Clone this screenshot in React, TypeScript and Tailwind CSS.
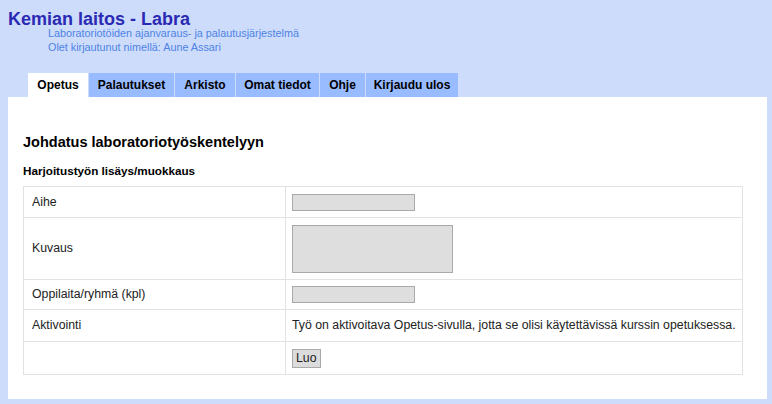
import React from 'react';

const tabs = [
  { label: 'Opetus', w: 'w-[60px]', active: true },
  { label: 'Palautukset', w: 'w-[85px]' },
  { label: 'Arkisto', w: 'w-[60px]' },
  { label: 'Omat tiedot', w: 'w-[83px]' },
  { label: 'Ohje', w: 'w-[45px]' },
  { label: 'Kirjaudu ulos', w: 'w-[92px]' },
];

const App = () => {
  return (
    <div className="w-[772px] h-[404px] overflow-hidden bg-[#cddcfb] font-['Liberation_Sans',Arial,sans-serif] text-[#222]">
      {/* header */}
      <div className="pl-[8px] pt-[8px]">
        <h1 className="text-[18px] leading-[22px] font-bold text-[#2a2ab4]">Kemian laitos - Labra</h1>
        <div className="-mt-[4px] pl-[40px] text-[10.8px] leading-[14px] text-[#4d83e4]">
          <div>Laboratoriotöiden ajanvaraus- ja palautusjärjestelmä</div>
          <div>Olet kirjautunut nimellä: Aune Assari</div>
        </div>
      </div>

      {/* tabs */}
      <div className="flex mt-[19px] ml-[28px] h-[24px]">
        {tabs.map((t) => (
          <div
            key={t.label}
            className={`${t.w} mr-[1px] flex items-center justify-center text-[12px] font-bold text-black ${
              t.active ? 'bg-white' : 'bg-[#99bbff]'
            }`}
          >
            {t.label}
          </div>
        ))}
      </div>

      {/* content panel */}
      <div className="ml-[8px] w-[759px] h-[302px] bg-white px-[15px] pt-[37px]">
        <h2 className="text-[14.5px] leading-[17px] font-bold text-black">Johdatus laboratoriotyöskentelyyn</h2>
        <h3 className="mt-[13px] text-[11.7px] leading-[14px] font-bold text-black">Harjoitustyön lisäys/muokkaus</h3>

        <table className="mt-[8px] w-[720px] border-collapse border border-[#b4b4b4] text-[12.3px]">
          <tbody>
            <tr className="h-[31px]">
              <td className="w-[262px] border border-[#e2e2e2] pl-[8px]">Aihe</td>
              <td className="border border-[#e2e2e2] pl-[6px]">
                <div className="w-[123px] h-[17px] bg-[#dedede] border border-[#a9a9a9]" />
              </td>
            </tr>
            <tr className="h-[62px]">
              <td className="border border-[#e2e2e2] pl-[8px]">Kuvaus</td>
              <td className="border border-[#e2e2e2] pl-[6px]">
                <div className="w-[161px] h-[48px] bg-[#dedede] border border-[#a9a9a9]" />
              </td>
            </tr>
            <tr className="h-[30px]">
              <td className="border border-[#e2e2e2] pl-[8px]">Oppilaita/ryhmä (kpl)</td>
              <td className="border border-[#e2e2e2] pl-[6px]">
                <div className="w-[123px] h-[17px] bg-[#dedede] border border-[#a9a9a9]" />
              </td>
            </tr>
            <tr className="h-[32px]">
              <td className="border border-[#e2e2e2] pl-[8px]">Aktivointi</td>
              <td className="border border-[#e2e2e2] pl-[6px]">
                Työ on aktivoitava Opetus-sivulla, jotta se olisi käytettävissä kurssin opetuksessa.
              </td>
            </tr>
            <tr className="h-[33px]">
              <td className="border border-[#e2e2e2]"></td>
              <td className="border border-[#e2e2e2] pl-[6px]">
                <button className="h-[19px] px-[3px] bg-[#dcdcdc] border border-[#aaaaaa] text-[12.3px] leading-[15px] text-[#222]">
                  Luo
                </button>
              </td>
            </tr>
          </tbody>
        </table>
      </div>
    </div>
  );
};

export default App;
